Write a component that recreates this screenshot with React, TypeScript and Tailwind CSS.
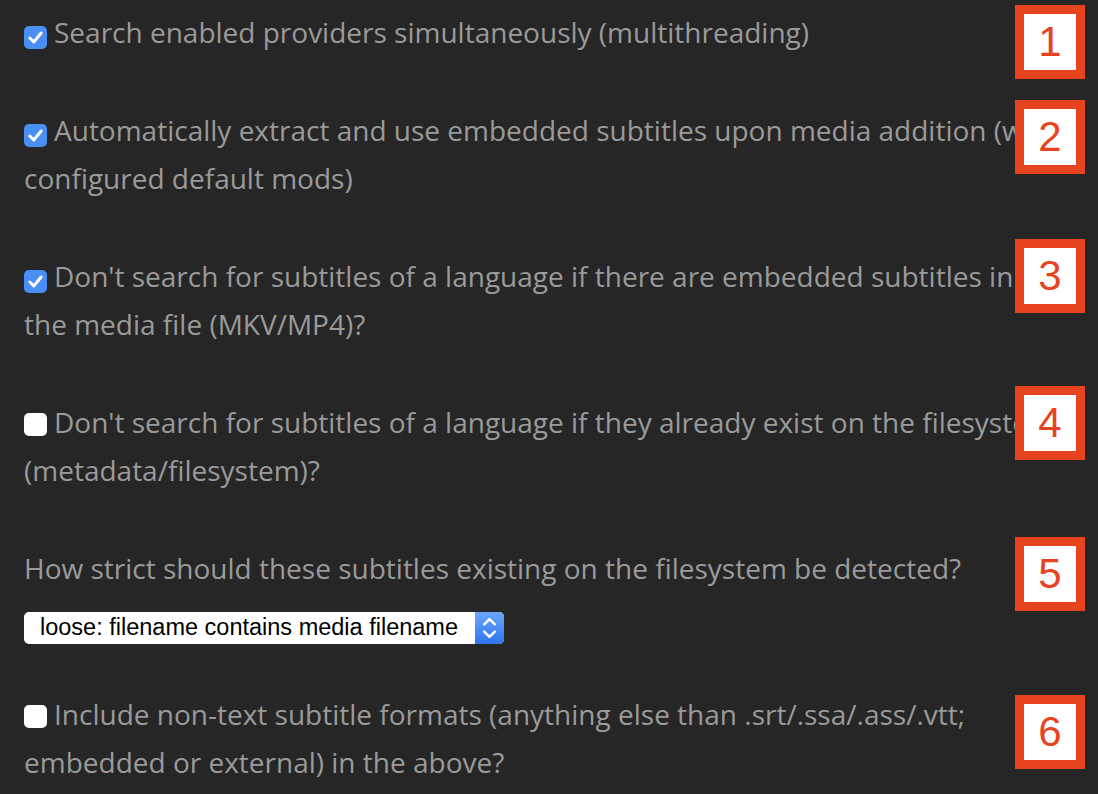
import React from 'react';

const Check = ({ checked }: { checked: boolean }) => (
  <span
    className={`inline-flex w-[23px] h-[23px] rounded-[5px] items-center justify-center align-[-3px] mr-[7px] ${
      checked ? 'bg-[#4a8ff5]' : 'bg-white'
    }`}
  >
    {checked && (
      <svg width="17" height="17" viewBox="0 0 15 15">
        <path d="M2.5 8 L6 11.5 L12.5 3.5" fill="none" stroke="white" strokeWidth="2.6" strokeLinecap="round" strokeLinejoin="round" />
      </svg>
    )}
  </span>
);

const Badge = ({ n, top }: { n: number; top: number }) => (
  <div
    className="absolute left-[1015px] w-[70px] h-[74px] bg-[#e8431f] p-[9px] flex"
    style={{ top }}
  >
    <div className="flex-1 bg-white flex items-center justify-center text-[#e8431f] text-[42px] leading-none font-['Liberation_Sans',Arial,sans-serif]">
      {n}
    </div>
  </div>
);

const rows = [
  { checked: true, text: 'Search enabled providers simultaneously (multithreading)' },
  { checked: true, text: 'Automatically extract and use embedded subtitles upon media addition (with configured default mods)' },
  { checked: true, text: "Don't search for subtitles of a language if there are embedded subtitles in the media file (MKV/MP4)?" },
  { checked: false, text: "Don't search for subtitles of a language if they already exist on the filesystem (metadata/filesystem)?" },
];

export default function App() {
  return (
    <div className="relative w-[1098px] h-[794px] overflow-hidden bg-[#262626] text-[#9a9a9a] font-['Open_Sans',sans-serif] text-[28px] leading-[48px]">
      <div className="w-[1058px] pl-[24px] pt-[8px] flex flex-col gap-[50px]">
        {rows.map((r, i) => (
          <div key={i}>
            <Check checked={r.checked} />
            {r.text}
          </div>
        ))}
        <div>
          <div>How strict should these subtitles existing on the filesystem be detected?</div>
          <div className="mt-[20px] w-[480px] h-[32px] bg-white rounded-[5px] flex items-center">
            <span className="flex-1 pl-[16px] text-black text-[23.5px] leading-none font-['Liberation_Sans',Arial,sans-serif]">
              loose: filename contains media filename
            </span>
            <span className="w-[29px] h-full rounded-r-[5px] bg-gradient-to-b from-[#6aa8f8] to-[#2f73ee] flex items-center justify-center">
              <svg width="17" height="26" viewBox="0 0 14 22">
                <path d="M2.5 8 L7 3.5 L11.5 8 M2.5 14 L7 18.5 L11.5 14" fill="none" stroke="white" strokeWidth="2" strokeLinecap="round" strokeLinejoin="round" />
              </svg>
            </span>
          </div>
        </div>
        <div className="-mt-[4px]">
          <Check checked={false} />
          Include non-text subtitle formats (anything else than .srt/.ssa/.ass/.vtt; embedded or external) in the above?
        </div>
      </div>
      <Badge n={1} top={5} />
      <Badge n={2} top={100} />
      <Badge n={3} top={239} />
      <Badge n={4} top={386} />
      <Badge n={5} top={537} />
      <Badge n={6} top={695} />
    </div>
  );
}
